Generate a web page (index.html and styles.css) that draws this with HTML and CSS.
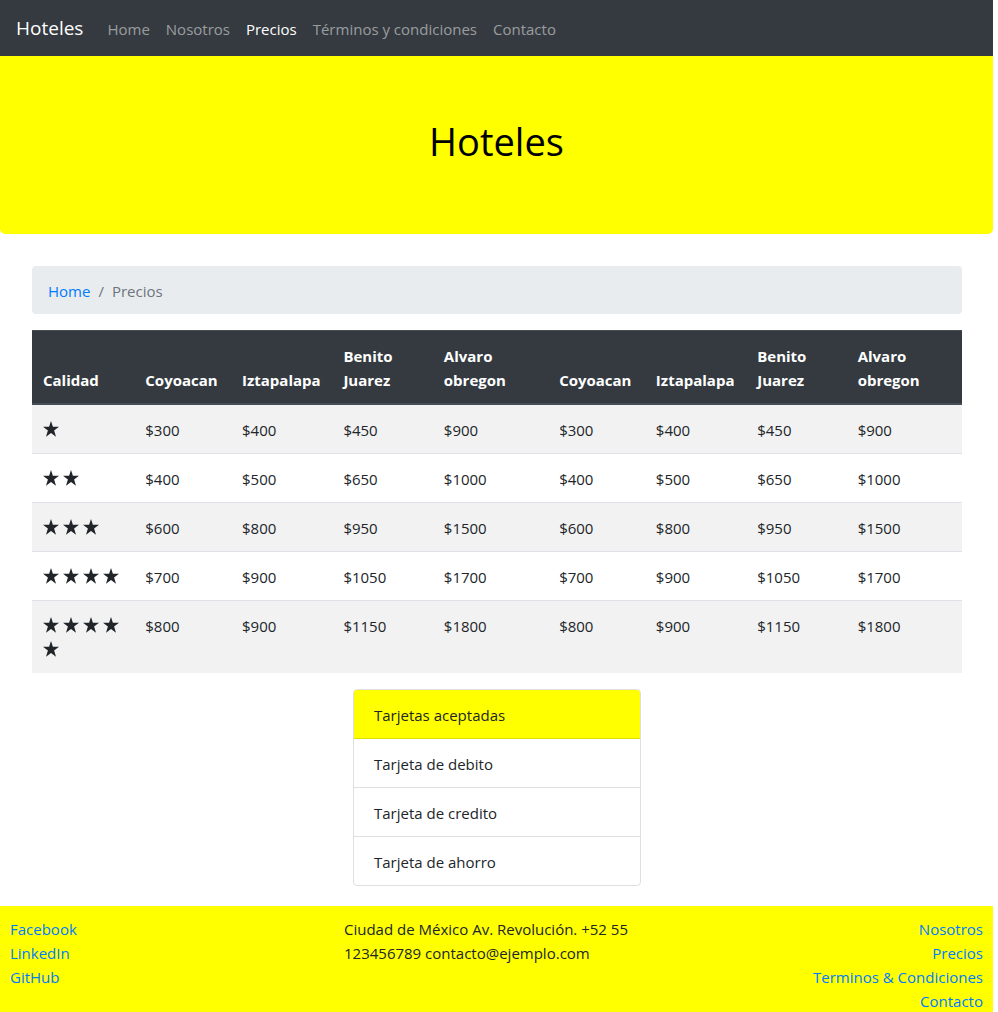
FILE: index.html
```html
<!DOCTYPE html>
<html lang="es">
<head>
<meta charset="utf-8">
<meta name="viewport" content="width=device-width, initial-scale=1">
<title>Hoteles - Precios</title>
<link rel="stylesheet" href="styles.css">
</head>
<body>
<svg class="sprite" aria-hidden="true"><symbol id="star" viewBox="0 0 16 16"><path d="M8 0l1.900 5.800H16L11.100 9.500l1.900 6.200L8 12l-5 3.700 1.900-6.200L0 5.800h6.100z"/></symbol></svg>
<nav class="navbar">
  <a class="brand" href="#">Hoteles</a>
  <ul class="nav-list">
    <li><a class="nav-link" href="#">Home</a></li>
    <li><a class="nav-link" href="#">Nosotros</a></li>
    <li><a class="nav-link nav-link-active" href="#" aria-current="page">Precios</a></li>
    <li><a class="nav-link" href="#">Términos y condiciones</a></li>
    <li><a class="nav-link" href="#">Contacto</a></li>
  </ul>
</nav>
<header class="hero"><h1 class="hero-title">Hoteles</h1></header>
<main class="content">
  <nav aria-label="breadcrumb">
    <ol class="breadcrumb">
      <li><a href="#">Home</a></li>
      <li class="crumb-current" aria-current="page">Precios</li>
    </ol>
  </nav>
  <table class="prices">
    <colgroup><col class="c-quality"><col class="c-coy"><col class="c-izt"><col class="c-ben"><col class="c-alv"><col class="c-coy"><col class="c-izt"><col class="c-ben"><col class="c-last"></colgroup>
    <thead>
      <tr><th scope="col">Calidad</th><th scope="col">Coyoacan</th><th scope="col">Iztapalapa</th><th scope="col">Benito Juarez</th><th scope="col">Alvaro obregon</th><th scope="col">Coyoacan</th><th scope="col">Iztapalapa</th><th scope="col">Benito Juarez</th><th scope="col">Alvaro obregon</th></tr>
    </thead>
    <tbody>
      <tr><td><span class="stars"><svg><use href="#star"/></svg></span></td><td>$300</td><td>$400</td><td>$450</td><td>$900</td><td>$300</td><td>$400</td><td>$450</td><td>$900</td></tr>
      <tr><td><span class="stars"><svg><use href="#star"/></svg><svg><use href="#star"/></svg></span></td><td>$400</td><td>$500</td><td>$650</td><td>$1000</td><td>$400</td><td>$500</td><td>$650</td><td>$1000</td></tr>
      <tr><td><span class="stars"><svg><use href="#star"/></svg><svg><use href="#star"/></svg><svg><use href="#star"/></svg></span></td><td>$600</td><td>$800</td><td>$950</td><td>$1500</td><td>$600</td><td>$800</td><td>$950</td><td>$1500</td></tr>
      <tr><td><span class="stars"><svg><use href="#star"/></svg><svg><use href="#star"/></svg><svg><use href="#star"/></svg><svg><use href="#star"/></svg></span></td><td>$700</td><td>$900</td><td>$1050</td><td>$1700</td><td>$700</td><td>$900</td><td>$1050</td><td>$1700</td></tr>
      <tr><td><span class="stars"><svg><use href="#star"/></svg><svg><use href="#star"/></svg><svg><use href="#star"/></svg><svg><use href="#star"/></svg><svg><use href="#star"/></svg></span></td><td>$800</td><td>$900</td><td>$1150</td><td>$1800</td><td>$800</td><td>$900</td><td>$1150</td><td>$1800</td></tr>
    </tbody>
  </table>
  <ul class="cards">
    <li class="cards-title">Tarjetas aceptadas</li>
    <li>Tarjeta de debito</li>
    <li>Tarjeta de credito</li>
    <li>Tarjeta de ahorro</li>
  </ul>
</main>
<footer class="footer">
  <ul class="footer-list">
    <li><a href="#">Facebook</a></li>
    <li><a href="#">LinkedIn</a></li>
    <li><a href="#">GitHub</a></li>
  </ul>
  <p class="address">Ciudad de México Av. Revolución. +52 55 123456789 contacto@ejemplo.com</p>
  <ul class="footer-list footer-list-end">
    <li><a href="#">Nosotros</a></li>
    <li><a href="#">Precios</a></li>
    <li><a href="#">Terminos &amp; Condiciones</a></li>
    <li><a href="#">Contacto</a></li>
  </ul>
</footer>
</body>
</html>
```
FILE: styles.css
```css
*, *::before, *::after { box-sizing: border-box; }
body {
  margin: 0 5px 0 0;
  background: #fff;
  color: #212529;
  font: 400 15px/24px "Segoe UI", "Open Sans", "Noto Sans", sans-serif;
}
ul, ol { margin: 0; padding: 0; list-style: none; }
a { color: #007bff; text-decoration: none; }
.sprite { display: none; }
.navbar {
  display: flex;
  align-items: center;
  gap: 16px;
  min-height: 56px;
  padding: 8px 16px;
  background: #343a40;
}
.brand { color: #fff; font-size: 19px; line-height: 30px; }
.nav-list { display: flex; }
.nav-link { display: block; padding: 9px 8px 7px; color: rgba(255, 255, 255, .5); }
.nav-link-active { color: #fff; }
.hero {
  padding: 61px 32px 69px;
  background: #ff0;
  border-radius: 0 0 5px 5px;
  text-align: center;
}
.hero-title { margin: 0; color: #000; font-size: 38px; font-weight: 400; line-height: 48px; }
.content { padding: 32px 31px 20px 32px; }
.breadcrumb {
  display: flex;
  margin-bottom: 16px;
  padding: 13px 16px 11px;
  background: #e9ecef;
  border-radius: 4px;
}
.crumb-current { color: #6c757d; }
.crumb-current::before { content: "/"; padding: 0 8px; }
.prices { width: 100%; border-collapse: collapse; table-layout: fixed; }
.prices th, .prices td { padding: 13px 11px 11px; text-align: left; vertical-align: top; border-top: 1px solid #dee2e6; }
.prices th {
  vertical-align: bottom;
  background: #343a40;
  color: #fff;
  font-weight: 700;
  border-top-color: #454d55;
  border-bottom: 2px solid #454d55;
}
.prices tbody tr:nth-child(odd) { background: #f2f2f2; }
.c-quality { width: 11%; }
.c-coy { width: 10.4%; }
.c-izt { width: 10.9%; }
.c-ben { width: 10.8%; }
.c-alv { width: 12.4%; }
.stars { display: flex; flex-wrap: wrap; column-gap: 4px; }
.stars svg { width: 16px; height: 24px; padding: 3px 0 5px; fill: #212529; }
.cards {
  width: 288px;
  margin: 16px auto 0;
  border: 1px solid rgba(0, 0, 0, .125);
  border-radius: 4px;
  overflow: hidden;
}
.cards li { padding: 13px 20px 11px; border-bottom: 1px solid rgba(0, 0, 0, .125); }
.cards li:last-child { border-bottom: 0; }
.cards .cards-title { background: #ff0; }
.footer {
  display: grid;
  grid-template-columns: 1fr 305px 1fr;
  min-height: 106px;
  padding: 11px 10px 0;
  background: #ff0;
}
.address { margin: 0; }
.footer-list-end { text-align: right; }
```
